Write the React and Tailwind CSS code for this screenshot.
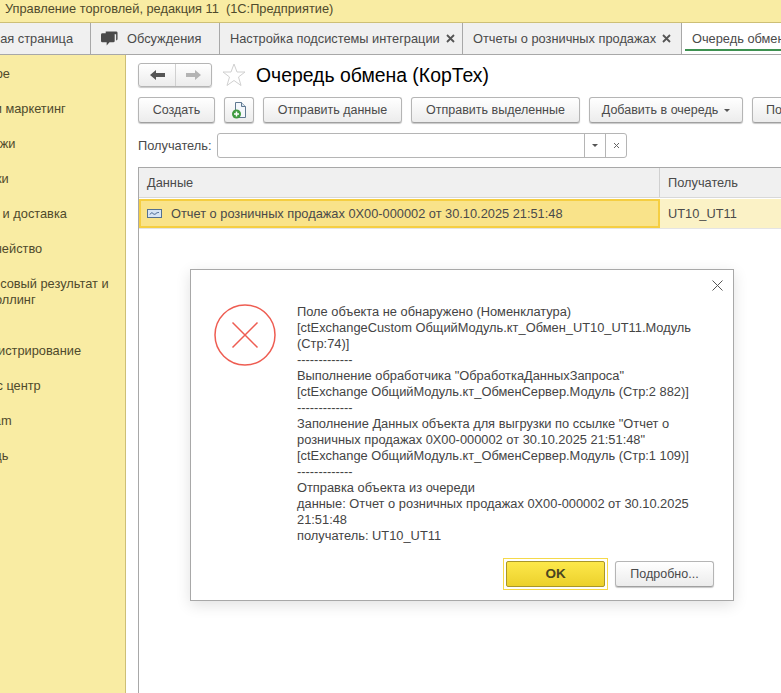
// App.jsx — очередь обмена, окно ошибки
const FONT = "font-['Liberation_Sans',Arial,sans-serif]";

const sidebarItems = [
  { text: "Главное", left: "ml-[-39px]" },
  { text: "CRM и маркетинг", left: "ml-[-38px]" },
  { text: "Продажи", left: "ml-[-38px]" },
  { text: "Закупки", left: "ml-[-38px]" },
  { text: "Склад и доставка", left: "ml-[-38px]" },
  { text: "Казначейство", left: "ml-[-39px]" },
  { text: "Финансовый результат и контроллинг", left: "ml-[-38px]", tall: true },
  { text: "Администрирование", left: "ml-[-41px]" },
  { text: "Сервис центр", left: "ml-[-41px]" },
  { text: "Telegram", left: "ml-[-41px]" },
  { text: "Помощь", left: "ml-[-41px]" },
];

const messageLines = [
  "Поле объекта не обнаружено (Номенклатура)",
  "[ctExchangeCustom ОбщийМодуль.кт_Обмен_UT10_UT11.Модуль",
  "(Стр:74)]",
  "-------------",
  "Выполнение обработчика \"ОбработкаДанныхЗапроса\"",
  "[ctExchange ОбщийМодуль.кт_ОбменСервер.Модуль (Стр:2 882)]",
  "-------------",
  "Заполнение Данных объекта для выгрузки по ссылке \"Отчет о",
  "розничных продажах 0X00-000002 от 30.10.2025 21:51:48\"",
  "[ctExchange ОбщийМодуль.кт_ОбменСервер.Модуль (Стр:1 109)]",
  "-------------",
  "Отправка объекта из очереди",
  "данные: Отчет о розничных продажах 0X00-000002 от 30.10.2025",
  "21:51:48",
  "получатель: UT10_UT11",
];

function ToolButton({ children, className = "" }) {
  return (
    <div className={`h-[26px] shrink-0 flex items-center justify-center rounded-[3px] border border-[#b5b5b5] border-b-[#a0a0a0] bg-gradient-to-b from-white to-[#ececec] shadow-[0_1px_1px_#c8c8c8] text-[12.5px] text-[#4a4a4a] whitespace-nowrap ${className}`}>
      {children}
    </div>
  );
}

function CloseGlyph() {
  return (
    <svg width="9" height="9" viewBox="0 0 9 9" className="ml-[6px] shrink-0">
      <path d="M1 1l7 7M8 1L1 8" stroke="#555" strokeWidth="1.8" />
    </svg>
  );
}

function Tab({ children, className = "" }) {
  return (
    <div className={`h-full shrink-0 flex items-center border-r border-[#a8a8a8] whitespace-nowrap ${className}`}>
      {children}
    </div>
  );
}

export default function App() {
  return (
    <div className={`relative w-[781px] h-[693px] overflow-hidden bg-white text-[12.8px] text-[#4a4a4a] ${FONT}`}>
      <div className="h-[23px] bg-[#f9eca3] border-b border-[#cdbf76] pl-[5px] leading-[17px] text-[#4f4a2c]">
        Управление торговлей, редакция 11&nbsp; (1С:Предприятие)
      </div>

      <div className="h-[32px] bg-[#f0f0f0] border-b border-[#a8a8a8] flex overflow-hidden">
        <Tab className="w-[91px] justify-end pr-[17px]">ная страница</Tab>
        <Tab className="w-[129px] pl-[10px]">
          <svg width="17" height="16" viewBox="0 0 18 16" className="mr-[9px]">
            <path d="M5 0h11a1.500 1.500 0 0 1 1.500 1.500V8a1.500 1.500 0 0 1-1.500 1.500V3H5z" fill="#4a4a4a" />
            <path d="M1.500 2h11.500A1.500 1.500 0 0 1 14.500 3.500V10A1.500 1.500 0 0 1 13 11.500H9L6 15v-3.500H1.500A1.500 1.500 0 0 1 0 10V3.500A1.500 1.500 0 0 1 1.500 2z" fill="#4a4a4a" />
          </svg>
          Обсуждения
        </Tab>
        <Tab className="w-[243px] pl-[10px]">Настройка подсистемы интеграции<CloseGlyph /></Tab>
        <Tab className="w-[219px] pl-[10px]">Отчеты о розничных продажах<CloseGlyph /></Tab>
        <div className="relative flex-1 bg-white flex items-center pl-[10px] whitespace-nowrap">
          Очередь обмена (КорТех)
          <div className="absolute left-[3px] right-0 bottom-[3px] h-[2px] bg-[#3d9150]" />
        </div>
      </div>

      <div className="flex h-[638px]">
        <div className="w-[126px] shrink-0 bg-[#f9eca3] border-r border-[#cdbf76] overflow-hidden text-[#4f4a2c]">
          {sidebarItems.map((item) => (
            <div
              key={item.text}
              className={`${item.left} w-[165px] pt-[9px] leading-[16px] first:mt-[2px] ${item.tall ? "pb-[26px]" : "pb-[10px]"}`}
            >
              {item.text}
            </div>
          ))}
        </div>

        <div className="flex-1 min-w-0 pl-[12px] overflow-hidden">
          <div className="flex items-center h-[26px] mt-[7px]">
            <div className="w-[74px] h-[24px] flex rounded-[3px] border border-[#b5b5b5] bg-gradient-to-b from-white to-[#ececec] shadow-[0_1px_1px_#c8c8c8]">
              <div className="w-[37px] flex items-center justify-center border-r border-[#d0d0d0]">
                <svg width="15" height="10" viewBox="0 0 15 10"><path d="M0 5l6-5v3h9v4H6v3z" fill="#555" /></svg>
              </div>
              <div className="flex-1 flex items-center justify-center">
                <svg width="15" height="10" viewBox="0 0 15 10"><path d="M15 5L9 0v3H0v4h9v3z" fill="#b4b4b4" /></svg>
              </div>
            </div>
            <svg width="24" height="24" viewBox="0 0 24 24" className="ml-[10px]">
              <path d="M12 1l3 8h8l-6.500 5 2.500 8.500L12 17.500 5 22.500 7.500 14 1 9h8z" fill="white" stroke="#d0d0d0" />
            </svg>
            <div className="ml-[10px] mt-[2px] text-[19.4px] text-black whitespace-nowrap">Очередь обмена (КорТех)</div>
          </div>

          <div className="flex mt-[9px] gap-[9px]">
            <ToolButton className="w-[77px]">Создать</ToolButton>
            <ToolButton className="w-[30px]">
              <svg width="14" height="17" viewBox="0 0 14 17">
                <path d="M3.500 .5h6l4 4v11h-10z" fill="#f4f7fb" stroke="#5f7890" />
                <path d="M9.500 .5v4h4" fill="#d8e2ec" stroke="#5f7890" />
                <circle cx="4.500" cy="12" r="4.500" fill="#3f9a3f" />
                <path d="M4.500 9.500v5M2 12h5" stroke="white" strokeWidth="1.500" />
              </svg>
            </ToolButton>
            <ToolButton className="w-[139px]">Отправить данные</ToolButton>
            <ToolButton className="w-[169px]">Отправить выделенные</ToolButton>
            <ToolButton className="w-[154px]">
              Добавить в очередь
              <svg width="6" height="3" viewBox="0 0 6 3" className="ml-[6px]"><path d="M0 0h6L3 3z" fill="#555" /></svg>
            </ToolButton>
            <ToolButton className="w-[100px] justify-start pl-[13px]">Поместить</ToolButton>
          </div>

          <div className="flex items-center mt-[10px] h-[25px]">
            <span className="w-[79px] shrink-0">Получатель:</span>
            <div className="w-[410px] h-[25px] flex rounded-[3px] border border-[#b5b5b5] bg-white">
              <div className="flex-1" />
              <div className="w-[21px] flex items-center justify-center border-l border-[#b5b5b5]">
                <svg width="6" height="3" viewBox="0 0 6 3"><path d="M0 0h6L3 3z" fill="#555" /></svg>
              </div>
              <div className="w-[21px] flex items-center justify-center border-l border-[#b5b5b5]">
                <svg width="7" height="7" viewBox="0 0 7 7"><path d="M1 1l5 5M6 1L1 6" stroke="#666" /></svg>
              </div>
            </div>
          </div>

          <div className="mt-[9px] w-[700px] h-[540px] border border-[#a8a8a8]">
            <div className="flex h-[30px] bg-[#f0f0f0] border-b border-[#d8d8d8]">
              <div className="w-[521px] pl-[8px] flex items-center border-r border-[#d0d0d0]">Данные</div>
              <div className="flex-1 pl-[8px] flex items-center">Получатель</div>
            </div>
            <div className="flex h-[30px] border-b border-[#e4e4e4] mt-[1px]">
              <div className="w-[521px] flex items-center pl-[6px] bg-[#f9e38a] border-2 border-[#f5ce42]">
                <svg width="15" height="9" viewBox="0 0 15 9" className="mr-[9px]">
                  <rect x=".5" y=".5" width="14" height="8" fill="#d6e4f4" stroke="#54708f" />
                  <path d="M3 5.500c1-2 2-2 3-1s2 1 3 0 2-1 3-1" fill="none" stroke="#3f5f8a" />
                </svg>
                Отчет о розничных продажах 0X00-000002 от 30.10.2025 21:51:48
              </div>
              <div className="flex-1 pl-[8px] flex items-center bg-[#fbf2c6]">UT10_UT11</div>
            </div>
          </div>
        </div>
      </div>

      {/* окно ошибки */}
      <div className="absolute left-[190px] top-[269px] w-[544px] h-[332px] bg-white border border-[#a8a8a8] shadow-[0_4px_14px_rgba(0,0,0,0.12)]">
        <svg width="11" height="11" viewBox="0 0 11 11" className="absolute right-[10px] top-[10px]">
          <path d="M.5.5l10 10M10.500.5l-10 10" stroke="#555" />
        </svg>
        <svg width="62" height="62" viewBox="0 0 62 62" className="absolute left-[23px] top-[34px]">
          <circle cx="31" cy="31" r="30" fill="none" stroke="#ee5d52" strokeWidth="1.500" />
          <path d="M18.500 18.500l25 25M43.500 18.500l-25 25" stroke="#ee5d52" strokeWidth="1.500" />
        </svg>
        <div className="pl-[106px] pt-[34px] text-[12.85px] leading-[16px] text-[#444] whitespace-nowrap">
          {messageLines.map((line, i) => (
            <div key={i}>{line}</div>
          ))}
        </div>
        <div className="absolute right-[19px] bottom-[10px] flex items-center gap-[7px]">
          <div className="p-[2px] border border-[#f5d94a]">
            <div className="w-[99px] h-[26px] flex items-center justify-center rounded-[2px] border border-[#a8962a] bg-gradient-to-b from-[#fde84a] to-[#ecd12a] font-bold text-[13.5px] text-[#4a4520]">
              OK
            </div>
          </div>
          <ToolButton className="w-[99px]">Подробно...</ToolButton>
        </div>
      </div>
    </div>
  );
}
